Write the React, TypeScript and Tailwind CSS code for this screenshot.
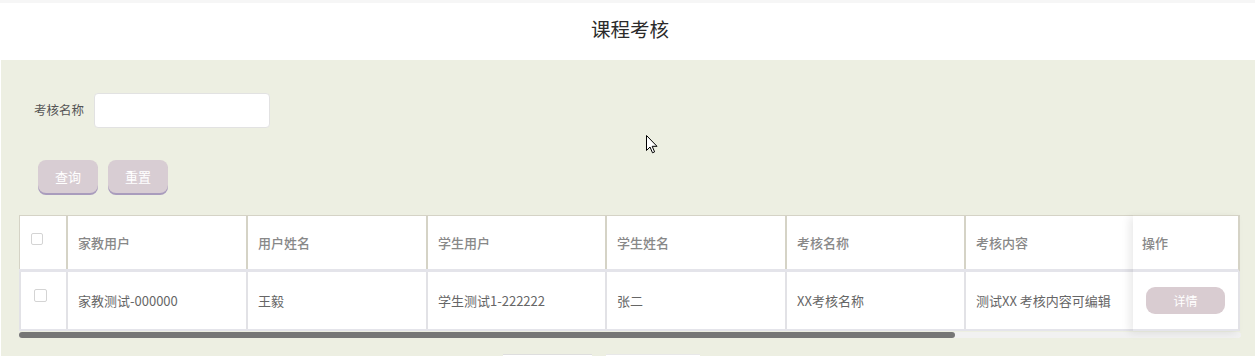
import React from "react";

const cols = [
  { h: "家教用户", v: "家教测试-000000", w: 180 },
  { h: "用户姓名", v: "王毅", w: 180 },
  { h: "学生用户", v: "学生测试1-222222", w: 179 },
  { h: "学生姓名", v: "张二", w: 180 },
  { h: "考核名称", v: "XX考核名称", w: 179 },
  { h: "考核内容", v: "测试XX 考核内容可编辑", w: 180 },
  { h: "", v: "", w: 180 },
  { h: "", v: "", w: 180 },
];

export default function App() {
  return (
    <div
      className="relative w-[1255px] h-[356px] overflow-hidden bg-white antialiased"
      style={{ fontFamily: '"Noto Sans CJK SC", "Noto Sans", sans-serif' }}
    >
      <div className="h-[3px] bg-[#f6f6f6]" />
      <header className="h-[57px] flex items-center justify-center pb-[6px]">
        <span className="text-[19.5px] text-[#2b2b2b] leading-none pl-[5px]">课程考核</span>
      </header>
      <main className="ml-px bg-[#edefe2] h-[296px] pt-[33px]">
        <div className="flex items-center pl-[33px]">
          <label className="text-[12.5px] text-[#555] mr-[10px]">考核名称</label>
          <input className="w-[176px] h-[35px] bg-white border border-[#e2e2e2] rounded-[4px] outline-none" />
        </div>
        <div className="flex gap-[10px] pl-[37px] mt-[32px]">
          <button className="w-[60px] h-[33px] rounded-[8px] bg-[#d8cdd3] shadow-[0_2px_0_#a99cbd] text-white text-[13px]">
            查询
          </button>
          <button className="w-[60px] h-[33px] rounded-[8px] bg-[#d8cdd3] shadow-[0_2px_0_#a99cbd] text-white text-[13px]">
            重置
          </button>
        </div>
        <div className="relative ml-[18px] mt-[22px] w-[1221px]">
          <div className="overflow-hidden w-[1221px]">
            <div className="w-max">
              <div className="flex h-[57px] bg-white border-t border-[#d5d3c6] border-b-[3px] border-b-[#e4e4ea]">
                <div className="w-[49px] shrink-0 border-l border-r-[2px] border-[#d5d3c6] pl-[11px] pt-[17px]">
                  <div className="w-[12px] h-[12px] border border-[#d4d4d4] rounded-[2px] bg-white" />
                </div>
                {cols.map((c, i) => (
                  <div
                    key={i}
                    style={{ width: c.w }}
                    className="shrink-0 border-r-[2px] border-[#d5d3c6] flex items-center pl-[10px] text-[13px] text-[#888] font-medium"
                  >
                    {c.h}
                  </div>
                ))}
              </div>
              <div className="flex h-[59px] bg-white border-b-[2px] border-[#e4e4ea]">
                <div className="w-[49px] shrink-0 border-l-[2px] border-r-[2px] border-[#e2e2e6] pl-[13px] pt-[17px]">
                  <div className="w-[13px] h-[13px] border border-[#d4d4d4] rounded-[2px] bg-white" />
                </div>
                {cols.map((c, i) => (
                  <div
                    key={i}
                    style={{ width: c.w }}
                    className="shrink-0 border-r-[2px] border-[#e2e2e6] flex items-center pl-[10px] text-[13px] text-[#666]"
                  >
                    {c.v}
                  </div>
                ))}
              </div>
            </div>
          </div>
          <div className="mt-[1px] h-[6px] bg-[#f1f1f1] rounded-[3px] w-[1222px]">
            <div className="h-[6px] w-[936px] rounded-[3px] bg-[#767676]" />
          </div>
          <div className="absolute top-0 left-[1114px] w-[107px] h-[116px] bg-white shadow-[-4px_2px_8px_rgba(0,0,0,0.08)]">
            <div className="h-[57px] border-t border-r-[2px] border-[#d5d3c6] border-b-[3px] border-b-[#e4e4ea] flex items-center pl-[9px] text-[13px] text-[#888] font-medium">
              操作
            </div>
            <div className="h-[59px] border-r-[2px] border-[#e2e2e6] border-b-[2px] border-b-[#e4e4ea] flex items-center pl-[13px]">
              <button className="w-[79px] h-[27px] rounded-[9px] bg-[#d9ccd1] text-white text-[12px]">
                详情
              </button>
            </div>
          </div>
        </div>
        <div className="flex mt-[16px] ml-[502px] gap-[14px]">
          <div className="w-[89px] h-[20px] bg-white border-t border-[#dedede]" />
          <div className="w-[94px] h-[20px] bg-white border-t border-[#e8e8e8]" />
        </div>
      </main>
      <svg
        className="absolute left-[646px] top-[135px]"
        width="12"
        height="19"
        viewBox="0 0 12 19"
      >
        <path
          d="M0.5 0.5 L0.5 15.5 L4 12 L6.5 17.8 L8.6 16.9 L6.2 11.3 L11 11.3 Z"
          fill="#fff"
          stroke="#000"
          strokeWidth="1"
          strokeLinejoin="miter"
        />
      </svg>
    </div>
  );
}
